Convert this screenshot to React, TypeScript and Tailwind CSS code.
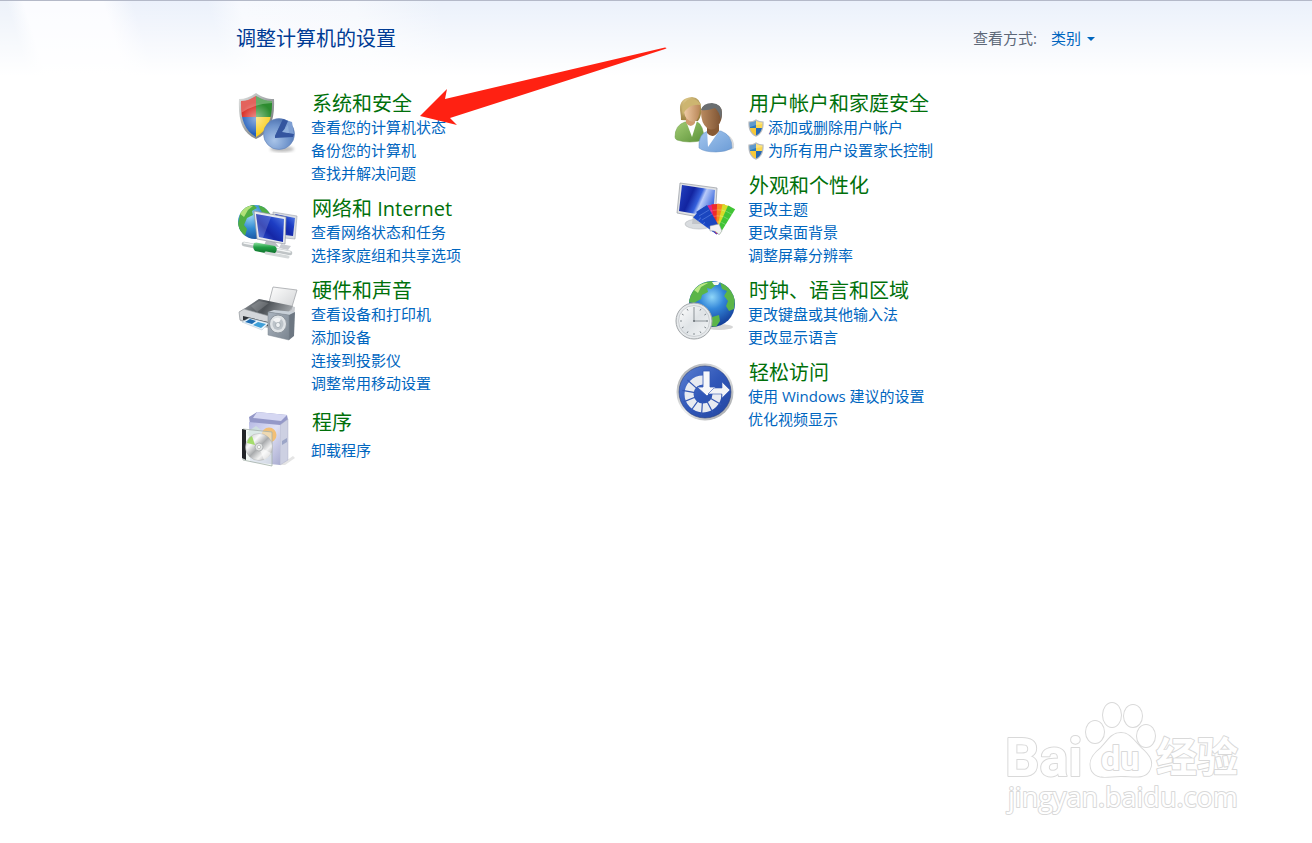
import type { ReactNode } from "react";

type Task = { label: string; admin?: boolean };

type Category = {
  title: string;
  icon: ReactNode;
  tasks: Task[];
};

const QuarterShield = () => (
  <svg viewBox="0 0 16 18" className="h-[18px] w-4 shrink-0" aria-hidden="true">
    <defs>
      <clipPath id="uac-clip">
        <path d="M8 1.8C10 3 12 3.4 14.4 3.4C14.6 9 13.4 13.6 8 16.6C2.6 13.6 1.4 9 1.6 3.4C4 3.4 6 3 8 1.8Z" />
      </clipPath>
    </defs>
    <path d="M8 .3C10.200 2 12.600 2.400 15.600 2.400C16 9.600 14.200 14.800 8 17.800C1.800 14.800 0 9.600 .4 2.400C3.400 2.400 5.800 2 8 .3Z" fill="#b9bcc0" />
    <g clipPath="url(#uac-clip)">
      <rect width="8" height="9" fill="#2a78bd" />
      <rect x="8" width="8" height="9" fill="#fbd850" />
      <rect y="9" width="8" height="9" fill="#f6c83a" />
      <rect x="8" y="9" width="8" height="9" fill="#2468b4" />
      <path d="M0 0H16V5Q8 5 0 9Z" fill="#fff" opacity=".25" />
    </g>
  </svg>
);

const SecurityIcon = () => (
  <svg viewBox="0 0 64 64" className="size-16">
    <defs>
      <linearGradient id="sec-rim" x1="0" y1="0" x2="1" y2="1">
        <stop offset="0" stopColor="#e4e6e4" />
        <stop offset=".5" stopColor="#9fa3a5" />
        <stop offset="1" stopColor="#6c7072" />
      </linearGradient>
      <radialGradient id="sec-pie" cx=".35" cy=".7" r=".8">
        <stop offset="0" stopColor="#a9c4e8" />
        <stop offset=".6" stopColor="#6e93cb" />
        <stop offset="1" stopColor="#4669a8" />
      </radialGradient>
      <radialGradient id="sec-glow" cx=".5" cy=".55" r=".5">
        <stop offset="0" stopColor="#fff" stopOpacity=".5" />
        <stop offset="1" stopColor="#fff" stopOpacity="0" />
      </radialGradient>
      <clipPath id="sec-clip">
        <path d="M21 5C26 8 31 10 37 10C37.500 27 33 39 21 46C9 39 5.500 27 6 10C12 10 16 8 21 5Z" />
      </clipPath>
      <filter id="soft"><feGaussianBlur stdDeviation="1.500" /></filter>
    </defs>
    <ellipse cx="47" cy="58" rx="12" ry="3" fill="#555" opacity=".4" filter="url(#soft)" />
    <path d="M21 2C27 6 32 8 39 8C40 29 35 42 21 48C7 42 3 29 4 8C10 8 15 6 21 2Z" fill="url(#sec-rim)" />
    <g clipPath="url(#sec-clip)">
      <rect x="4" y="4" width="17" height="22" fill="#d8281f" />
      <rect x="21" y="4" width="19" height="22" fill="#2c8c2f" />
      <rect x="4" y="26" width="17" height="22" fill="#2260bd" />
      <rect x="21" y="26" width="19" height="22" fill="#f9cf22" />
      <path d="M4 4H40V12Q20 12 6 22Z" fill="#fff" opacity=".28" />
      <circle cx="21" cy="26" r="16" fill="url(#sec-glow)" />
    </g>
    <circle cx="44" cy="43" r="15.500" fill="url(#sec-pie)" stroke="#6685b8" strokeWidth=".6" />
    <path d="M40 45L48 28Q57 30 59 43Z" fill="#4568ac" />
    <path d="M48 28L57 31L59 43L51 44Z" fill="#7e9fd3" />
    <path d="M40 45L48 28L53 30L48 41L59 43L58 46L40 47Z" fill="#34559f" />
    <path d="M47 41L53 34L54 42Z" fill="#8fb0dd" />
  </svg>
);

const NetworkIcon = () => (
  <svg viewBox="0 0 64 64" className="size-16">
    <defs>
      <radialGradient id="net-globe" cx=".35" cy=".3" r=".8">
        <stop offset="0" stopColor="#9fd8f6" />
        <stop offset=".5" stopColor="#3189d2" />
        <stop offset="1" stopColor="#154a96" />
      </radialGradient>
      <linearGradient id="net-screen" x1="0" y1="1" x2="1" y2="0">
        <stop offset="0" stopColor="#3f6ae0" />
        <stop offset=".4" stopColor="#1527a6" />
        <stop offset=".65" stopColor="#1d3dc4" />
        <stop offset="1" stopColor="#5c86ea" />
      </linearGradient>
      <linearGradient id="net-tube" x1="0" y1="0" x2="0" y2="1">
        <stop offset="0" stopColor="#8fe0a0" />
        <stop offset=".4" stopColor="#22a046" />
        <stop offset="1" stopColor="#0c6a28" />
      </linearGradient>
      <clipPath id="net-clip"><circle cx="20" cy="26" r="17" /></clipPath>
    </defs>
    <circle cx="20" cy="26" r="17" fill="url(#net-globe)" />
    <g clipPath="url(#net-clip)" fill="#4fae45">
      <path d="M6 14Q12 7 19 9L22 12L17 15L18 19L12 22L9 29L12 33L10 40L2 32Z" />
      <path d="M23 8L33 12L36 20L28 18L25 13Z" />
      <path d="M4 17Q11 8 18 10L13 14L9 21Z" fill="#b1e079" />
    </g>
    <path d="M38 16L62 20L60 43L50 42L38 38Z" fill="#d8dce2" stroke="#9da3ac" strokeWidth=".6" />
    <path d="M40 18L60 22L58 40L50 39Z" fill="url(#net-screen)" />
    <path d="M46 48L56 50L53 54L44 52Z" fill="#c8cbd0" />
    <path d="M31 45L40 46L44 51L29 49Z" fill="#b9bdc3" />
    <path d="M19 15L51 21L50 48L22 43Z" fill="#e8eaee" stroke="#8e949e" strokeWidth=".7" />
    <path d="M21 18L49 23L48 46L24 41Z" fill="url(#net-screen)" />
    <path d="M21 18L36 21L28 42L24 41Z" fill="#fff" opacity=".18" />
    <path d="M9 48L55 57" stroke="#bfc4c6" strokeWidth="4.500" strokeLinecap="round" />
    <path d="M9 47L55 56" stroke="#f4f6f6" strokeWidth="1.500" strokeLinecap="round" />
    <path d="M19 47Q21 46 24 47L40 50Q43 52 41 56Q39 59 35 58L20 55Q17 52 19 47Z" fill="url(#net-tube)" />
    <path d="M31 57L53 61" stroke="#d4d8d9" strokeWidth="3" strokeLinecap="round" />
  </svg>
);

const HardwareIcon = () => (
  <svg viewBox="0 0 64 64" className="size-16">
    <defs>
      <linearGradient id="hw-top" x1="0" y1="0" x2="1" y2=".3">
        <stop offset="0" stopColor="#8b9095" />
        <stop offset=".5" stopColor="#4c5156" />
        <stop offset="1" stopColor="#9b9fa3" />
      </linearGradient>
      <linearGradient id="hw-paper" x1="0" y1="0" x2="1" y2="1">
        <stop offset="0" stopColor="#fff" />
        <stop offset="1" stopColor="#cfd1d3" />
      </linearGradient>
      <linearGradient id="hw-box" x1="0" y1="0" x2="1" y2="1">
        <stop offset="0" stopColor="#aab4bf" />
        <stop offset="1" stopColor="#7b8590" />
      </linearGradient>
    </defs>
    <path d="M4 34L24 21L60 29L59 42L32 50L5 43Z" fill="#c9ccd0" />
    <path d="M38 9L62 12L56 32L33 28Z" fill="url(#hw-paper)" stroke="#a3a6a9" strokeWidth=".8" />
    <path d="M9 31L24 21L58 28L50 39L34 42Z" fill="url(#hw-top)" />
    <path d="M16 28L24 23L34 25L22 34Z" fill="#fff" opacity=".15" />
    <path d="M4 34L9 31L34 38L34 49L5 42Z" fill="#d3d6da" stroke="#8a8e93" strokeWidth=".6" />
    <path d="M8 38L33 44V48L8 42Z" fill="#2d3238" />
    <path d="M7 44L14 40L34 45L27 52Z" fill="#e9f3fa" stroke="#9cb2c2" strokeWidth=".4" />
    <path d="M10 44L15 41L21 43L17 46Z" fill="#1f6cb2" />
    <path d="M18 47L23 44L31 46L26 50Z" fill="#3e9fd8" />
    <path d="M33 34L39 32L60 34L54 37Z" fill="#c8d0d8" />
    <path d="M54 37L60 34L59 58L54 62Z" fill="#6d7782" />
    <path d="M33 34L54 37L54 62L33 57Z" fill="url(#hw-box)" stroke="#7b858f" strokeWidth=".5" />
    <ellipse cx="43" cy="46" rx="8.500" ry="9" fill="#dfe3e6" stroke="#8d959d" />
    <ellipse cx="43" cy="46" rx="5.500" ry="6" fill="#bcc3c9" />
    <path d="M43 46L38 42Q42 38 46 41Z" fill="#fff" opacity=".8" />
    <ellipse cx="43" cy="47" rx="2.400" ry="2.600" fill="#eef1f3" stroke="#7d868f" strokeWidth=".5" />
  </svg>
);

const ProgramsIcon = () => (
  <svg viewBox="0 0 64 64" className="size-16">
    <defs>
      <linearGradient id="prog-front" x1="0" y1="0" x2="1" y2="1">
        <stop offset="0" stopColor="#b7bbe4" />
        <stop offset=".5" stopColor="#dfe0f5" />
        <stop offset="1" stopColor="#a9acd0" />
      </linearGradient>
      <linearGradient id="prog-disc" x1="0" y1="0" x2="1" y2="1">
        <stop offset="0" stopColor="#b9bbbd" />
        <stop offset=".3" stopColor="#f9f9f9" />
        <stop offset=".5" stopColor="#a9abad" />
        <stop offset=".7" stopColor="#f2f2f2" />
        <stop offset="1" stopColor="#8f9193" />
      </linearGradient>
    </defs>
    <path d="M45 55L58 46L60 48L50 55Z" fill="#999" opacity=".25" />
    <path d="M14 7L22 2L52 5L53 10L46 16L15 14Z" fill="#9498c8" />
    <path d="M22 2L52 5L46 11L18 8Z" fill="#d5d7f2" />
    <path d="M45 15L53 9L53 50L45 55Z" fill="#cdd0e2" stroke="#a1a5bf" strokeWidth=".4" />
    <path d="M14 12L45 15L45 55L15 52Z" fill="url(#prog-front)" />
    <path d="M47 31L52 28V32L47 35Z" fill="#9ca5c7" />
    <circle cx="34" cy="25" r="7.500" fill="#f2bf76" />
    <path d="M12 22L21 16L26 20V26H13Z" fill="#cfe4dc" opacity=".8" />
    <path d="M8 19L37 22V56L8 50Z" fill="#eaf4ee" fillOpacity=".5" stroke="#a4b1aa" strokeWidth=".8" />
    <path d="M7 19L11 20V50L7 48Z" fill="#222428" />
    <circle cx="24" cy="37" r="13.500" fill="url(#prog-disc)" stroke="#a1a3a5" strokeWidth=".4" />
    <path d="M20 35L12 33Q13 28 17 26Z" fill="#8bd63f" opacity=".75" />
    <path d="M24 37L29 50Q34 48 36 43Z" fill="#fff" opacity=".6" />
    <circle cx="24" cy="37" r="4" fill="#dfe1e1" stroke="#999c9e" strokeWidth=".6" />
    <circle cx="24" cy="37" r="1.600" fill="#fff" stroke="#888" strokeWidth=".4" />
  </svg>
);

const UsersIcon = () => (
  <svg viewBox="0 0 64 64" className="size-16">
    <defs>
      <radialGradient id="usr-hair" cx=".35" cy=".2" r=".9">
        <stop offset="0" stopColor="#e0cb8c" />
        <stop offset="1" stopColor="#94793a" />
      </radialGradient>
      <linearGradient id="usr-green" x1="0" y1="0" x2="1" y2="1">
        <stop offset="0" stopColor="#a6cf76" />
        <stop offset="1" stopColor="#5a9138" />
      </linearGradient>
      <linearGradient id="usr-blue" x1="0" y1="0" x2="1" y2="1">
        <stop offset="0" stopColor="#a3c6ee" />
        <stop offset="1" stopColor="#6c9cd6" />
      </linearGradient>
      <linearGradient id="usr-face" x1="0" y1="0" x2="1" y2="0">
        <stop offset="0" stopColor="#f0cba6" />
        <stop offset="1" stopColor="#b98758" />
      </linearGradient>
      <linearGradient id="usr-skin" x1="0" y1="0" x2="1" y2="0">
        <stop offset="0" stopColor="#b98a5f" />
        <stop offset="1" stopColor="#7b5131" />
      </linearGradient>
    </defs>
    <path d="M44 58Q58 61 62 57Q63 48 56 44Z" fill="#888" opacity=".3" />
    <path d="M9 29Q9 25 8 19Q7 7 20 6Q29 7 29 17Q30 25 26 30Z" fill="url(#usr-hair)" />
    <path d="M3 46Q3 34 13 31L24 30Q32 34 32 49Q17 53 5 49Q3 48 3 46Z" fill="url(#usr-green)" stroke="#6a9b45" strokeWidth=".5" />
    <path d="M14 30L20 46L25 30Z" fill="#fff" />
    <path d="M14 25L14 32Q19 38 23 32V25Z" fill="#cf9b6e" />
    <path d="M12 21Q12 15 19 14L28 13Q28 29 22 31Q13 30 12 21Z" fill="url(#usr-face)" />
    <path d="M11 25Q8 14 15 9Q23 5 29 14Q20 13 15 18Q12 20 11 25Z" fill="#cdb570" />
    <path d="M27 57Q26 43 36 40L49 40Q60 44 60 57Q54 61 44 61Q32 61 27 57Z" fill="url(#usr-blue)" stroke="#6690c4" strokeWidth=".5" />
    <path d="M35 39L36 56L47 40Z" fill="#fff" />
    <path d="M35 34V42Q41 49 47 40V34Z" fill="#875a35" />
    <path d="M29 21Q29 13 40 13Q50 13 50 22Q50 30 46 35Q41 41 35 37Q29 32 29 21Z" fill="url(#usr-skin)" />
    <path d="M29 19Q31 12 40 12Q50 13 50 22L49 29Q47 20 43 17Q35 20 29 19Z" fill="#6a6e70" />
  </svg>
);

const fan = [
  { color: "#1b49c8", angle: -50 },
  { color: "#3b2bb0", angle: -36 },
  { color: "#9a1fae", angle: -25 },
  { color: "#e0218a", angle: -15 },
  { color: "#ee2b2b", angle: -5 },
  { color: "#f58a1f", angle: 6 },
  { color: "#d6dc28", angle: 17 },
  { color: "#41c435", angle: 28 },
];

const AppearanceIcon = () => (
  <svg viewBox="0 0 64 64" className="size-16">
    <defs>
      <linearGradient id="app-screen" x1="0" y1="0" x2="1" y2=".4">
        <stop offset="0" stopColor="#2443c4" />
        <stop offset=".4" stopColor="#1224a0" />
        <stop offset=".62" stopColor="#3560dc" />
        <stop offset=".72" stopColor="#b9cbf8" />
        <stop offset="1" stopColor="#4a74e0" />
      </linearGradient>
    </defs>
    <ellipse cx="27" cy="51" rx="14" ry="5" fill="#d9dcdf" stroke="#b5b8bc" strokeWidth=".6" />
    <path d="M21 42L32 44L34 51H20Z" fill="#c2c5ca" />
    <path d="M8 10L45 15L43 47L5 40Z" fill="#dfe1e4" stroke="#9599a0" strokeWidth=".7" />
    <path d="M10 12L43 17L41 44L7 38Z" fill="url(#app-screen)" />
    {fan.map(({ color, angle }) => (
      <g key={color} transform={`rotate(${angle} 46 60)`}>
        <path d="M42 31L50 31L48 60H44Z" fill={color} />
        <path d="M43 37H50M43 43H49M44 49H49" stroke="#fff" strokeWidth=".5" opacity=".45" />
      </g>
    ))}
    <path d="M24 39L35 32L48 55L41 59Z" fill="#1a46bf" />
    <path d="M27 43L37 37M30 47L40 41" stroke="#5f87e4" strokeWidth=".6" />
    <path d="M38 53L47 51L50 58L47 62Q44 57 38 58Z" fill="#f1f2f3" stroke="#9a9da1" strokeWidth=".5" />
  </svg>
);

const ClockIcon = () => (
  <svg viewBox="0 0 64 64" className="size-16">
    <defs>
      <radialGradient id="clk-globe" cx=".5" cy=".35" r=".65">
        <stop offset="0" stopColor="#8fd6f8" />
        <stop offset=".4" stopColor="#3488da" />
        <stop offset="1" stopColor="#123a95" />
      </radialGradient>
      <linearGradient id="clk-face" x1="0" y1="0" x2="1" y2="1">
        <stop offset="0" stopColor="#fff" />
        <stop offset=".5" stopColor="#dfe3e6" />
        <stop offset="1" stopColor="#f4f6f7" />
      </linearGradient>
      <clipPath id="clk-clip"><circle cx="40" cy="26" r="23" /></clipPath>
    </defs>
    <ellipse cx="47" cy="49" rx="14" ry="3" fill="#777" opacity=".3" />
    <circle cx="40" cy="26" r="23" fill="url(#clk-globe)" />
    <g clipPath="url(#clk-clip)" fill="#5bb548">
      <path d="M20 14Q28 3 40 3L44 7L39 11L35 10L36 14L30 17L29 21L22 25L16 24Z" />
      <path d="M48 4L58 10L63 20L62 31L57 33L54 28L56 23L52 18L55 13L50 11Z" />
      <path d="M40 39L47 37L48 43L44 49L38 48Z" />
      <path d="M22 12Q29 4 36 5L29 9L26 15Z" fill="#bce886" />
      <path d="M40 4L48 4L46 7L42 7Z" fill="#f3f8f3" />
    </g>
    <circle cx="22" cy="43" r="18" fill="#e6e9eb" stroke="#a2a6a9" strokeWidth="1" />
    <circle cx="22" cy="43" r="15.500" fill="url(#clk-face)" stroke="#c3c7ca" strokeWidth=".8" />
    {[0, 30, 60, 90, 120, 150, 180, 210, 240, 270, 300, 330].map((a) => (
      <path key={a} d="M22 29V31" stroke="#70787e" strokeWidth=".8" transform={`rotate(${a} 22 43)`} />
    ))}
    <path d="M22 31V43H36" stroke="#8d9499" strokeWidth="1" fill="none" />
    <circle cx="22" cy="43" r="1" fill="#6a7176" />
  </svg>
);

const AccessIcon = () => (
  <svg viewBox="0 0 64 64" className="size-16">
    <defs>
      <linearGradient id="acc-disc" x1="0" y1="0" x2="1" y2="1">
        <stop offset="0" stopColor="#5c80d2" />
        <stop offset=".5" stopColor="#3057b8" />
        <stop offset="1" stopColor="#2446a0" />
      </linearGradient>
      <linearGradient id="acc-rim" x1="0" y1="0" x2="1" y2="1">
        <stop offset="0" stopColor="#9c9fa3" />
        <stop offset=".5" stopColor="#eceded" />
        <stop offset="1" stopColor="#95989c" />
      </linearGradient>
    </defs>
    <circle cx="33" cy="32" r="28.500" fill="url(#acc-rim)" />
    <circle cx="33" cy="32" r="26" fill="url(#acc-disc)" stroke="#2a3f7c" strokeWidth=".6" />
    <path d="M31 20A14 14 0 1 0 45 34" fill="none" stroke="#e8ebf1" strokeWidth="9" />
    {[30, 62, 94, 126, 158, 190, 222].map((a) => (
      <path key={a} d="M39 34H52" stroke="#3458b4" strokeWidth="1.200" transform={`rotate(${a} 31 34)`} />
    ))}
    <path d="M31 11H38V27L44 27L35 36L25 27L31 27Z" fill="#f7f8fa" stroke="#3458b4" strokeWidth=".8" />
    <path d="M36 34L42 28H50V22L58 30L50 38V34Z" fill="#f2f4f7" stroke="#3458b4" strokeWidth=".6" />
  </svg>
);

const leftColumn: Category[] = [
  {
    title: "系统和安全",
    icon: <SecurityIcon />,
    tasks: [{ label: "查看您的计算机状态" }, { label: "备份您的计算机" }, { label: "查找并解决问题" }],
  },
  {
    title: "网络和 Internet",
    icon: <NetworkIcon />,
    tasks: [{ label: "查看网络状态和任务" }, { label: "选择家庭组和共享选项" }],
  },
  {
    title: "硬件和声音",
    icon: <HardwareIcon />,
    tasks: [
      { label: "查看设备和打印机" },
      { label: "添加设备" },
      { label: "连接到投影仪" },
      { label: "调整常用移动设置" },
    ],
  },
  {
    title: "程序",
    icon: <ProgramsIcon />,
    tasks: [{ label: "卸载程序" }],
  },
];

const rightColumn: Category[] = [
  {
    title: "用户帐户和家庭安全",
    icon: <UsersIcon />,
    tasks: [
      { label: "添加或删除用户帐户", admin: true },
      { label: "为所有用户设置家长控制", admin: true },
    ],
  },
  {
    title: "外观和个性化",
    icon: <AppearanceIcon />,
    tasks: [{ label: "更改主题" }, { label: "更改桌面背景" }, { label: "调整屏幕分辨率" }],
  },
  {
    title: "时钟、语言和区域",
    icon: <ClockIcon />,
    tasks: [{ label: "更改键盘或其他输入法" }, { label: "更改显示语言" }],
  },
  {
    title: "轻松访问",
    icon: <AccessIcon />,
    tasks: [{ label: "使用 Windows 建议的设置" }, { label: "优化视频显示" }],
  },
];

const CategoryCard = ({ title, icon, tasks }: Category) => {
  const single = tasks.length === 1;
  return (
    <section className={`flex gap-3 ${single ? "pt-1" : ""}`}>
      <div className="-mb-4 shrink-0 pt-px" aria-hidden="true">{icon}</div>
      <div className={`flex flex-col ${single ? "gap-1" : ""}`}>
        <h2 className="pt-0.5 pl-px text-xl leading-6 text-[#00700a]">
          <a href="#category">{title}</a>
        </h2>
        <ul>
          {tasks.map(({ label, admin }) => (
            <li key={label} className="flex h-[23px] items-center gap-1">
              {admin && <QuarterShield />}
              <a href="#task" className="text-[15px] leading-[23px] whitespace-nowrap text-[#0066bf]">
                {label}
              </a>
            </li>
          ))}
        </ul>
      </div>
    </section>
  );
};

const PointerArrow = () => (
  <svg viewBox="0 0 250 82" className="pointer-events-none absolute top-[44px] left-[418px] w-[250px]" aria-hidden="true">
    <path d="M2 71L29 44L27 54L247 2.500Q250 2.500 247 4L32 73L39 80Z" fill="#ff2112" />
  </svg>
);

const Watermark = () => (
  <svg
    viewBox="0 0 246 122"
    className="pointer-events-none absolute right-[66px] bottom-[23px] w-[246px]"
    fill="#fff"
    stroke="#d9d9d9"
    strokeWidth="2"
    strokeLinejoin="round"
    paintOrder="stroke"
  >
    <text x="5" y="78" className="font-['Roboto',sans-serif] text-[54px] font-bold">Bai</text>
    <ellipse cx="95" cy="34" rx="9" ry="11" />
    <ellipse cx="112" cy="17" rx="9" ry="12" />
    <ellipse cx="133" cy="18" rx="9" ry="11" />
    <ellipse cx="146" cy="38" rx="9" ry="11" />
    <path d="M121 35C130 35 134 43 141 50C150 58 154 64 149 73C144 81 134 78 121 78C108 78 98 82 92 73C88 64 92 57 101 50C108 43 111 35 121 35Z" />
    <text x="101" y="72" className="font-['Roboto',sans-serif] text-[34px] font-bold">du</text>
    <text x="156" y="74" className="font-['Noto_Sans_CJK_SC',sans-serif] text-[41px] font-bold">经验</text>
    <text x="8" y="109" className="font-['Open_Sans',sans-serif] text-[27px]">jingyan.baidu.com</text>
  </svg>
);

const App = () => {
  return (
    <main className="relative min-h-screen border-t border-[#b4b9c8] bg-white font-['Open_Sans','Noto_Sans_CJK_SC',sans-serif]">
      <div className="bg-[linear-gradient(to_bottom,transparent,white),linear-gradient(73deg,#edf2fa_28px,#fbfcff_44px,#fbfcff_120px,#ecf1fb_148px,#ebf1fb_220px,#f7f9fe_250px,#f5f8fd_360px,#ebf1fb_440px)]">
        <header className="ml-[235px] flex h-[75px] max-w-[860px] items-center justify-between">
          <h1 className="pl-px text-xl text-[#003b94]">调整计算机的设置</h1>
          <div className="flex items-center text-[15px]">
            <label htmlFor="view-by" className="text-[#5d6878]">查看方式:</label>
            <select id="view-by" className="ml-3.5 w-9 appearance-none bg-transparent text-[#0066bf]">
              <option>类别</option>
            </select>
            <span className="size-0 border-x-4 border-t-4 border-x-transparent border-t-[#0066bf]" />
          </div>
        </header>
      </div>
      <div className="ml-[235px] grid max-w-[874px] grid-cols-2 pt-[14px]">
        <div className="flex flex-col gap-[10px]">
          {leftColumn.map((category) => (
            <CategoryCard key={category.title} {...category} />
          ))}
        </div>
        <div className="flex flex-col gap-[10px]">
          {rightColumn.map((category) => (
            <CategoryCard key={category.title} {...category} />
          ))}
        </div>
      </div>
      <PointerArrow />
      <Watermark />
    </main>
  );
};

export default App;
